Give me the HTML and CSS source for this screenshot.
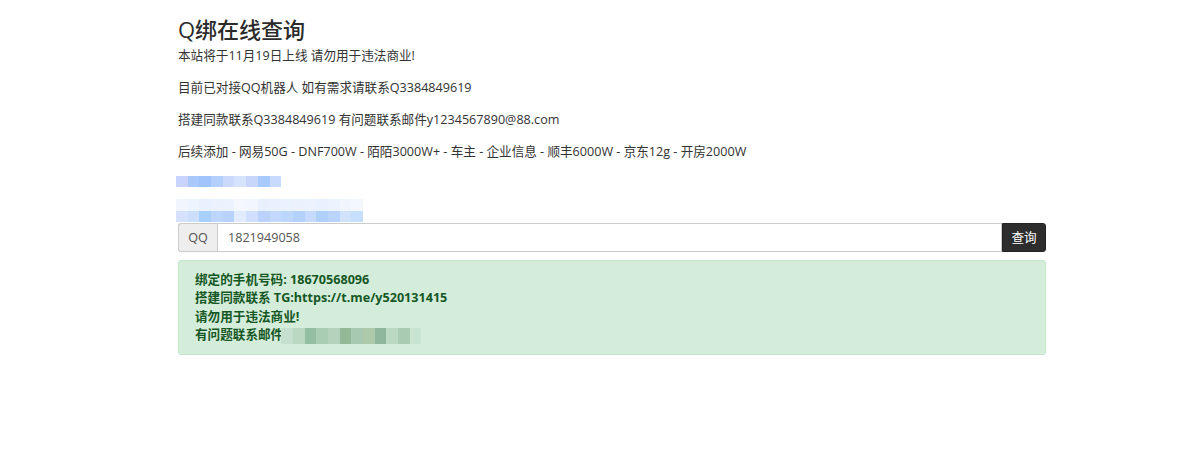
FILE: index.html
```html
<!DOCTYPE html>
<html lang="zh-CN">
<head>
<meta charset="utf-8">
<title>Q绑在线查询</title>
<link rel="stylesheet" href="styles.css">
</head>
<body>
<div class="wrap">
  <h1 class="title">Q绑在线查询</h1>
  <p class="line">本站将于11月19日上线 请勿用于违法商业!</p>
  <p class="line">目前已对接QQ机器人 如有需求请联系Q3384849619</p>
  <p class="line">搭建同款联系Q3384849619 有问题联系邮件y1234567890@88.com</p>
  <p class="line">后续添加 - 网易50G - DNF700W - 陌陌3000W+ - 车主 - 企业信息 - 顺丰6000W - 京东12g - 开房2000W</p>

  <div class="mosaic m1">
    <div class="row">
      <span style="background:#c8d4fc"></span><span style="background:#a9c8fc"></span><span style="background:#a0c4fc"></span><span style="background:#b4cffc"></span><span style="background:#cbdafc"></span><span style="background:#d6e3fd"></span><span style="background:#c8d6fc"></span><span style="background:#a8c9fc"></span><span style="background:#c8dafd"></span>
    </div>
  </div>

  <div class="mosaic m2">
    <div class="row">
      <span style="background:#f1f5fe"></span><span style="background:#eef4fe"></span><span style="background:#e9f1fe"></span><span style="background:#ebf2fe"></span><span style="background:#ecf3fe"></span><span style="background:#f4f8fe"></span><span style="background:#f2f7fe"></span><span style="background:#e8f0fe"></span><span style="background:#e9f1fe"></span><span style="background:#eaf2fe"></span><span style="background:#ebf2fe"></span><span style="background:#edf3fe"></span><span style="background:#eaf1fe"></span><span style="background:#ecf3fe"></span><span style="background:#f0f5fe"></span><span style="background:#f3f7fe"></span>
    </div>
    <div class="row">
      <span style="background:#d6e2fd"></span><span style="background:#cddefd"></span><span style="background:#a8d0fc"></span><span style="background:#bcd5fc"></span><span style="background:#b7d2fc"></span><span style="background:#e2ecfe"></span><span style="background:#cfdffd"></span><span style="background:#bbd3fc"></span><span style="background:#c2d8fc"></span><span style="background:#bdd6fc"></span><span style="background:#b4d1fc"></span><span style="background:#c5dafc"></span><span style="background:#b0d0fc"></span><span style="background:#b8d4fc"></span><span style="background:#d1e2fd"></span><span style="background:#c6dffd"></span>
    </div>
  </div>

  <form class="search">
    <span class="addon">QQ</span>
    <input class="field" type="text" value="1821949058">
    <button class="btn" type="button">查询</button>
  </form>

  <div class="alert">
    <div>绑定的手机号码: 18670568096</div>
    <div>搭建同款联系 TG:https://t.me/y520131415</div>
    <div>请勿用于违法商业!</div>
    <div class="last">有问题联系邮件<span class="mosaic m3"><span style="background:#c5e0ce"></span><span style="background:#b9d9c3"></span><span style="background:#94bea2"></span><span style="background:#a8cdb3"></span><span style="background:#b3d3bd"></span><span style="background:#93b896"></span><span style="background:#a7c9b1"></span><span style="background:#adc9a9"></span><span style="background:#8eb79d"></span><span style="background:#bcd9c4"></span><span style="background:#a8cbb2"></span><span style="background:#c8e3d0"></span></span></div>
  </div>
</div>
</body>
</html>
```

FILE: styles.css
```css
* { box-sizing: border-box; }
html, body { margin: 0; padding: 0; background: #fff; }
body {
  font-family: "Open Sans", "Noto Sans CJK SC", sans-serif;
  font-size: 12.6px;
  color: #333;
}
.wrap {
  width: 868px;
  margin-left: 178px;
  padding-top: 16px;
}
.title {
  margin: 0 0 5px;
  font-size: 22px;
  font-weight: 500;
  line-height: 26px;
  color: #2b2b2b;
}
.line {
  margin: 0 0 14px;
  line-height: 18px;
  white-space: nowrap;
}
.mosaic .row { display: flex; }
.mosaic .row span { display: block; width: 11.7px; }
.m1 { margin-left: -2px; margin-top: 15px; }
.m1 .row span { height: 11px; }
.m2 { margin-left: -2px; margin-top: 12px; }
.m2 .row:first-child span { height: 12px; }
.m2 .row span { height: 11px; }
.search {
  display: flex;
  height: 29px;
  margin: 1px 0 0;
}
.addon {
  display: flex;
  align-items: center;
  justify-content: center;
  width: 39px;
  background: #eee;
  border: 1px solid #ccc;
  border-right: 0;
  border-radius: 3px 0 0 3px;
  color: #555;
  font-size: 12.6px;
}
.field {
  flex: 1;
  min-width: 0;
  border: 1px solid #ccc;
  padding: 0 10px;
  font-family: "Open Sans", "Noto Sans CJK SC", sans-serif;
  font-size: 12.6px;
  color: #555;
  outline: none;
}
.btn {
  width: 44px;
  border: 1px solid #222;
  background: #2d2d2d;
  color: #fff;
  border-radius: 0 3px 3px 0;
  font-family: "Noto Sans CJK SC", sans-serif;
  font-size: 12.6px;
  padding: 0 0 2px;
}
.alert {
  margin-top: 8px;
  height: 95px;
  padding: 10px 16px;
  background: #d4edda;
  border: 1px solid #c3e6cb;
  border-radius: 3px;
  color: #155724;
  font-weight: 700;
  line-height: 18.4px;
}
.last { display: flex; align-items: center; }
.m3 { display: inline-flex; margin-left: -2px; height: 16px; margin-top: 2px; }
.m3 span { display: block; width: 11.7px; height: 16px; }
```
